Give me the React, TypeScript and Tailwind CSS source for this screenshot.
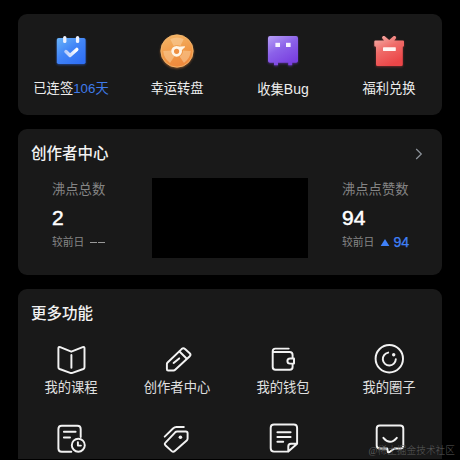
import type { ReactNode } from "react";

const LineIcon = ({ children }: { children: ReactNode }) => (
  <svg
    viewBox="0 0 36 36"
    className="h-9 w-9 text-[#f2f2f2]"
    fill="none"
    stroke="currentColor"
    strokeWidth="1.95"
    strokeLinecap="round"
    strokeLinejoin="round"
  >
    {children}
  </svg>
);

const CalendarIcon = () => (
  <svg viewBox="0 0 36 36" className="h-9 w-9 overflow-visible">
    <defs>
      <linearGradient id="calendar" x1="0" y1="0" x2="0.8" y2="1">
        <stop offset="0" stopColor="#69b4f8" />
        <stop offset="0.5" stopColor="#4285f7" />
        <stop offset="1" stopColor="#2f6ff5" />
      </linearGradient>
      <linearGradient id="check" x1="0" y1="0" x2="1" y2="0">
        <stop offset="0" stopColor="#b9cdfb" />
        <stop offset="1" stopColor="#ffffff" />
      </linearGradient>
    </defs>
    <rect x="3.8" y="5" width="28.8" height="26" rx="1.8" fill="url(#calendar)" className="drop-shadow-[0_1px_1px_rgba(47,111,245,0.5)]" />
    <rect x="10.1" y="2.9" width="3.3" height="7.1" rx="1.6" fill="#eef2ff" />
    <rect x="22.9" y="2.9" width="3.3" height="7.1" rx="1.6" fill="#eef2ff" />
    <path d="M12.9 18.6l4.1 3.9 6.8-6.1" fill="none" stroke="url(#check)" strokeWidth="3.4" strokeLinecap="round" strokeLinejoin="round" />
  </svg>
);

const blade = "M14.6 13L11.2 6Q18 2.8 24.8 6L21.4 13Q18 11 14.6 13Z";

const WheelIcon = () => (
  <svg viewBox="0 0 36 36" className="h-9 w-9 overflow-visible">
    <defs>
      <linearGradient id="wheel" x1="0.3" y1="0" x2="0.6" y2="1">
        <stop offset="0" stopColor="#f4b466" />
        <stop offset="0.6" stopColor="#f09644" />
        <stop offset="1" stopColor="#ee873c" />
      </linearGradient>
    </defs>
    <circle cx="18" cy="18" r="16.2" fill="url(#wheel)" stroke="#f6bd72" strokeWidth="0.8" className="drop-shadow-[0_1px_1px_rgba(240,140,60,0.5)]" />
    <g fill="#fbd3a3" fillOpacity="0.5">
      <path d={blade} />
      <path d={blade} transform="rotate(120 18 18)" />
      <path d={blade} transform="rotate(240 18 18)" />
    </g>
    <path d="M19 13.7l6.4-.5c.7 0 .8.7.4 1.1l-3.6 3.5z" fill="#fff5e6" />
    <circle cx="17.6" cy="18.3" r="4" fill="#ee8f42" stroke="#fff5e6" strokeWidth="2.8" />
  </svg>
);

const BugIcon = () => (
  <svg viewBox="0 0 36 36" className="h-9 w-9 overflow-visible">
    <defs>
      <linearGradient id="bug" x1="0" y1="0" x2="0.6" y2="1">
        <stop offset="0" stopColor="#b7a0f7" />
        <stop offset="0.5" stopColor="#8b61e9" />
        <stop offset="1" stopColor="#7a40e0" />
      </linearGradient>
    </defs>
    <path d="M5 3H31Q33 3 33 5V28Q33 29.8 31 29.8H27.2V32.3H23.2V29.8H13V32.3H9V29.8H5Q3 29.8 3 28V5Q3 3 5 3Z" fill="url(#bug)" className="drop-shadow-[0_1px_1px_rgba(122,64,224,0.5)]" />
    <rect x="10.4" y="9.8" width="4.6" height="4.2" fill="#f5f1ff" />
    <rect x="21" y="9.8" width="4.6" height="4.2" fill="#f5f1ff" />
  </svg>
);

const GiftIcon = () => (
  <svg viewBox="0 0 36 36" className="h-9 w-9 overflow-visible">
    <defs>
      <linearGradient id="gift" x1="0" y1="0" x2="0.5" y2="1">
        <stop offset="0" stopColor="#f5b4ad" />
        <stop offset="0.5" stopColor="#ef6b68" />
        <stop offset="1" stopColor="#ec4648" />
      </linearGradient>
    </defs>
    <path
      d="M4.3 7.5H13L11.2 5.3C10.6 3.6 12.4 2.5 13.8 3.3L18.2 7L22.4 3.3C23.8 2.5 25.6 3.6 25 5.3L23.3 7.5H32Q33 7.5 33 8.5V12.8Q33 13.8 31.8 13.8V31.5Q31.8 33 30.3 33H6.5Q5 33 5 31.5V13.8Q3.3 13.8 3.3 12.8V8.5Q3.3 7.5 4.3 7.5Z"
      fill="url(#gift)"
      className="drop-shadow-[0_1px_1px_rgba(236,70,72,0.4)]"
    />
    <rect x="12" y="14.3" width="12.8" height="3.6" rx="0.4" fill="#fff4f2" />
  </svg>
);

const shortcuts = [
  { icon: <CalendarIcon />, label: <>已连签<span className="text-[#3f7bea]">106天</span></> },
  { icon: <WheelIcon />, label: "幸运转盘" },
  { icon: <BugIcon />, label: <>收集<span className="text-[14px]">Bug</span></> },
  { icon: <GiftIcon />, label: "福利兑换" },
];

const features = [
  {
    label: "我的课程",
    icon: (
      <LineIcon>
        <path d="M18.3 10.7L7.2 6.1Q5.4 5.5 5.4 7.3V26.2Q5.4 27.5 6.6 28L17.2 31.9Q18.3 32.3 19.4 31.9L30.3 28Q31.5 27.5 31.5 26.2V7.3Q31.5 5.5 29.7 6.1Z" />
        <path d="M18.4 14v12.8" />
      </LineIcon>
    ),
  },
  {
    label: "创作者中心",
    icon: (
      <LineIcon>
        <path d="M7.9 28.2V23.1Q7.9 22.2 8.6 21.5L22.6 8.1Q24.3 6.6 26 8L30.7 12.2Q32.2 13.7 30.8 15.2L16.2 28.7Q15.5 29.4 14.5 29.4H9.1Q7.9 29.4 7.9 28.2Z" />
        <path d="M20.5 10.5l6.8 6.8M14.6 22l5.6-4.6" />
      </LineIcon>
    ),
  },
  {
    label: "我的钱包",
    icon: (
      <LineIcon>
        <path d="M23.7 7.6H10.3Q7.7 7.6 7.7 10.2V26Q7.7 28.8 10.5 28.8H24.8Q27.6 28.8 27.6 26V22.6M7.9 10.9H24.6Q27.6 10.9 27.6 13.9V17.4M29 17.4H25Q22.4 17.4 22.4 20T25 22.6H29Z" />
      </LineIcon>
    ),
  },
  {
    label: "我的圈子",
    icon: (
      <LineIcon>
        <circle cx="18.3" cy="17.7" r="13.7" />
        <path d="M17.2 11.6A6.5 6.5 0 1 0 24.8 18.3" />
        <circle cx="22.7" cy="13.7" r="1.7" fill="currentColor" stroke="none" />
      </LineIcon>
    ),
  },
  {
    label: "",
    icon: (
      <LineIcon>
        <path d="M18.3 31.7H8.7Q5.4 31.7 5.4 28.4V9Q5.4 5.7 8.7 5.7H24.4Q27.7 5.7 27.7 9V17" />
        <path d="M10.9 11.8H22.6M10.9 17.5H17" />
        <circle cx="25.3" cy="25.2" r="6.5" />
        <path d="M24.9 22.2v3.4h3" />
      </LineIcon>
    ),
  },
  {
    label: "",
    icon: (
      <LineIcon>
        <path d="M5.7 16.6L14 8.5Q15.5 7 17.5 7H24.8" />
        <path d="M18.2 11.5H26.8Q28.6 11.5 28.6 13.3V18.6Q28.6 19.8 27.7 20.6L15.8 31.1Q14.2 32.5 12.7 31.1L6.6 25.5Q5 24 6.5 22.6L16.2 12.3Q17 11.5 18.2 11.5Z" />
        <circle cx="21.4" cy="17.2" r="1.8" fill="currentColor" stroke="none" />
      </LineIcon>
    ),
  },
  {
    label: "",
    icon: (
      <LineIcon>
        <path d="M23.3 31.6H9Q5.7 31.6 5.7 28.3V7.7Q5.7 4.4 9 4.4H28.8Q32.1 4.4 32.1 7.7V23.8L23.3 31.6V26.4Q23.3 23.8 25.9 23.8H32.1" />
        <path d="M12.4 12.2H25.6M12.4 16.9H25.6M12.4 21.7H18.2" />
      </LineIcon>
    ),
  },
  {
    label: "",
    icon: (
      <LineIcon>
        <path d="M8.8 5.4H29.2Q32.3 5.4 32.3 8.5V25.4Q32.3 28.5 29.2 28.5H23.4L18.2 32.2Q17 32.7 16.8 31.5L16.2 28.5H8.8Q5.7 28.5 5.7 25.4V8.5Q5.7 5.4 8.8 5.4Z" />
        <path d="M12.4 17.8Q19 25.8 25.8 17.8" />
      </LineIcon>
    ),
  },
];

export default function App() {
  return (
    <div className="relative flex h-[460px] w-[460px] flex-col gap-3.5 overflow-hidden bg-black px-[18px] pt-3.5 font-['Liberation_Sans','Noto_Sans_CJK_SC',sans-serif] text-[#ededed]">
      <section className="grid h-[101px] shrink-0 grid-cols-4 rounded-[9px] bg-[#191919] pt-[19px]">
        {shortcuts.map((item, i) => (
          <div key={i} className="flex flex-col items-center gap-2.5">
            {item.icon}
            <span className="text-[13.3px] leading-5 whitespace-nowrap">{item.label}</span>
          </div>
        ))}
      </section>

      <section className="h-[146px] shrink-0 rounded-[9px] bg-[#191919]">
        <div className="flex items-center justify-between pt-[13px] pr-[19px] pl-[13px]">
          <h2 className="text-[15.5px] leading-6 font-medium text-[#f2f2f2]">创作者中心</h2>
          <svg viewBox="0 0 8 12" className="-mt-px h-3 w-2" fill="none" stroke="#8e949c" strokeWidth="1.2">
            <path d="M1.2 1l5.1 5-5.1 5" />
          </svg>
        </div>
        <div className="mt-3 flex">
          <div className="w-[134px] pl-[34px]">
            <div className="pt-px text-[13.3px] leading-[22px] text-[#858585]">沸点总数</div>
            <div className="mt-[3px] text-[21px] leading-7 text-white [-webkit-text-stroke:0.5px_#fff]">2</div>
            <div className="flex items-center gap-1.5 text-[10.8px] leading-5 text-[#858585]">
              较前日
              <span className="flex gap-px">
                <i className="h-px w-[7px] bg-[#999]" />
                <i className="h-px w-[7px] bg-[#999]" />
              </span>
            </div>
          </div>
          <div className="h-20 w-[156px] bg-black" />
          <div className="pl-[34px]">
            <div className="pt-px text-[13.3px] leading-[22px] text-[#858585]">沸点点赞数</div>
            <div className="mt-[3px] text-[21px] leading-7 text-white [-webkit-text-stroke:0.5px_#fff]">94</div>
            <div className="flex items-center text-[10.8px] leading-5 text-[#858585]">
              较前日
              <svg viewBox="0 0 10 8" className="ml-1.5 h-[7px] w-2.5 fill-[#3f80f7]">
                <path d="M5 0l5 8H0z" />
              </svg>
              <span className="ml-[3px] text-[14.2px] text-[#3f80f7] [-webkit-text-stroke:0.25px_#3f80f7]">94</span>
            </div>
          </div>
        </div>
      </section>

      <section className="h-[170px] shrink-0 overflow-hidden rounded-t-[9px] bg-[#191919] pt-[13px]">
        <h2 className="pl-[13px] text-[15.5px] leading-6 font-medium text-[#f2f2f2]">更多功能</h2>
        <div className="mt-[15px] grid grid-cols-4 gap-y-[22px]">
          {features.map((item, i) => (
            <div key={i} className="flex flex-col items-center">
              {item.icon}
              <span className="mt-px h-5 text-[13.3px] leading-5 whitespace-nowrap text-[#e0e0e0]">{item.label}</span>
            </div>
          ))}
        </div>
      </section>

      <span className="absolute right-[5px] bottom-[2px] font-['Liberation_Serif','Noto_Sans_CJK_SC',serif] text-[9.7px] leading-[14px] font-light whitespace-nowrap text-[#5c5c5c]">
        @稀土掘金技术社区
      </span>
    </div>
  );
}
